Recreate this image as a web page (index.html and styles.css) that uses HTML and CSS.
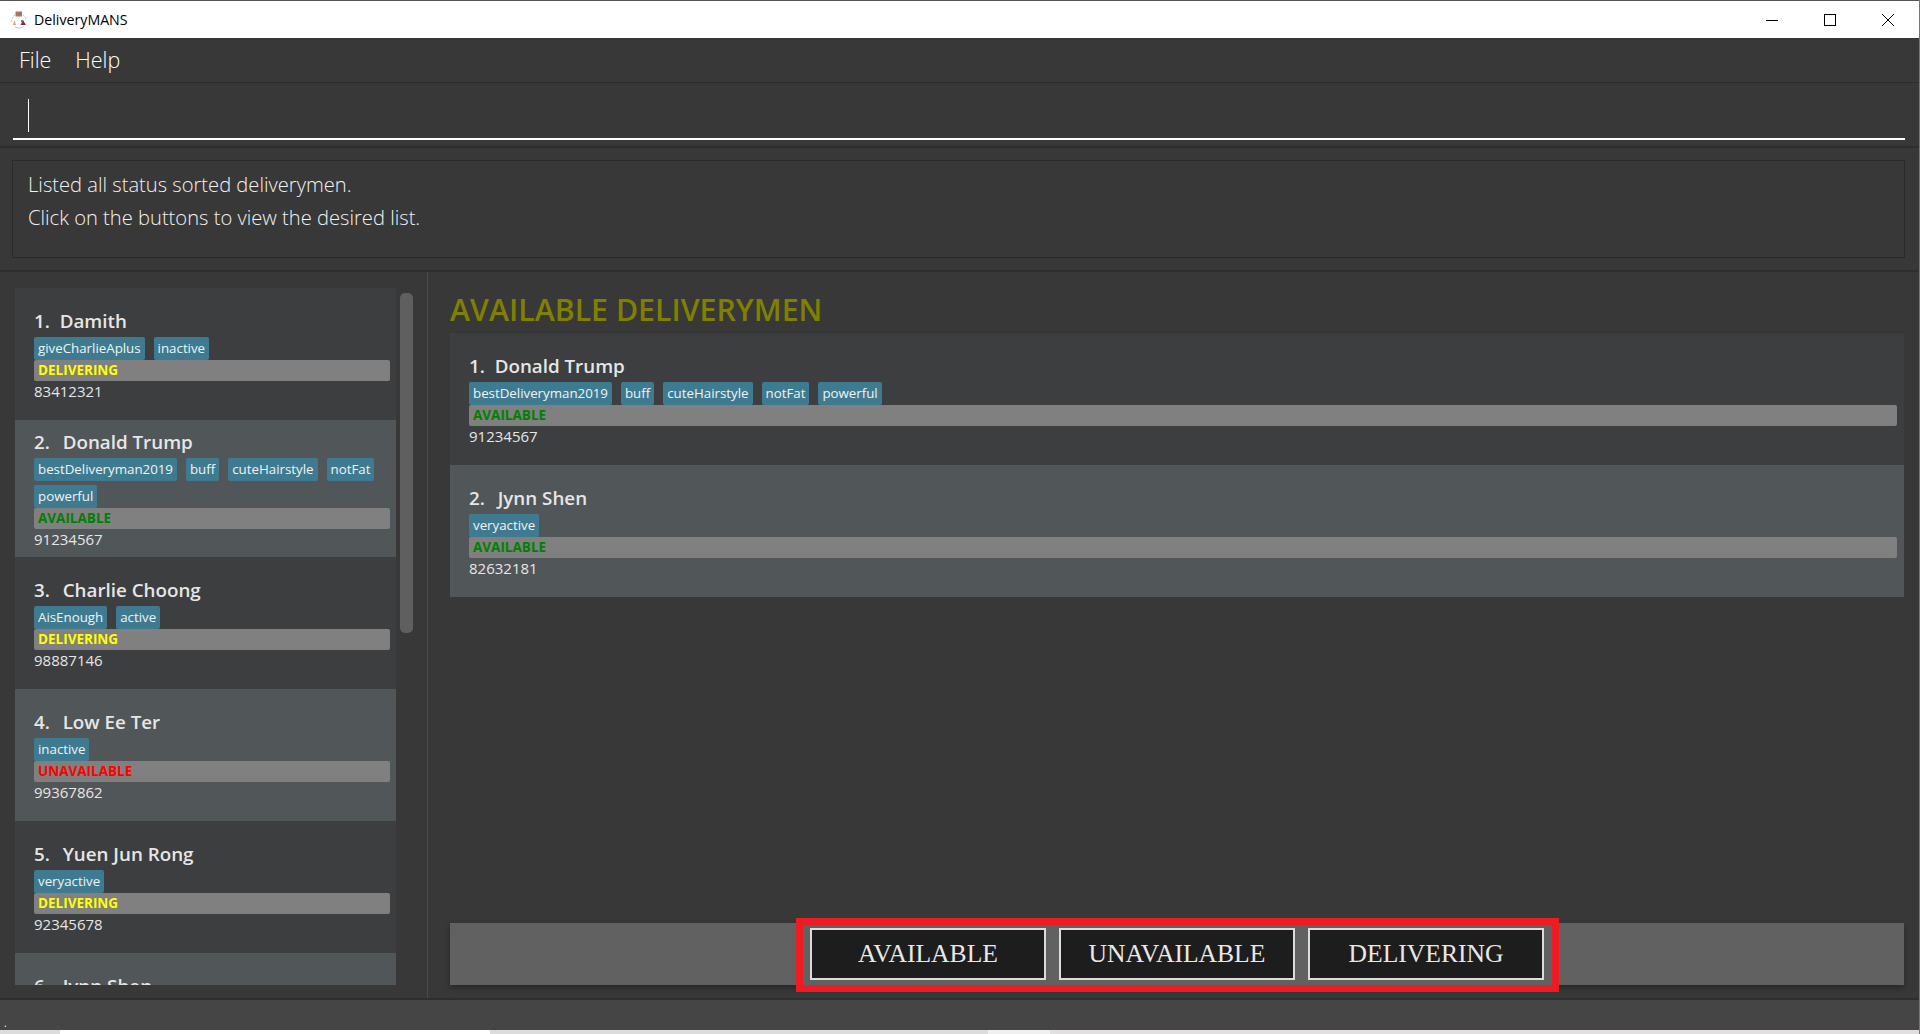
FILE: index.html
```html
<!DOCTYPE html>
<html>
<head>
    <meta charset="UTF-8">
    <meta name="viewport" content="width=device-width, initial-scale=1.0">
    <title>DeliveryMANS</title>
    <link rel="stylesheet" href="styles.css">
</head>
<body>
<div class="titlebar">
    <svg class="app-icon" width="18" height="18" viewBox="0 0 18 18">
        <path d="M5 4 A7.5 7.5 0 0 0 2 12" fill="none" stroke="#a8cbe8" stroke-width="1" stroke-dasharray="2 1"/>
        <path d="M5 16 A7.5 7.5 0 0 0 13 16" fill="none" stroke="#a8cbe8" stroke-width="1"/>
        <path d="M13 4 A7.5 7.5 0 0 1 16 9" fill="none" stroke="#a8cbe8" stroke-width="1" stroke-dasharray="2 1"/>
        <rect x="5.5" y="0.5" width="6.5" height="5" fill="#a9785a"/>
        <path d="M3 14 L4.5 9 L6 14 Z" fill="#e0a080"/>
        <path d="M10.5 14 L13 9 L16 14 Z" fill="#8a2f4a"/>
        <rect x="11" y="9" width="2" height="2" fill="#3f8f8f"/>
    </svg>
    <span class="app-name">DeliveryMANS</span>
    <div class="win-buttons">
        <svg width="14" height="14" viewBox="0 0 14 14"><path d="M1 7.5 H13" stroke="#000" stroke-width="1"/></svg>
        <svg width="14" height="14" viewBox="0 0 14 14"><rect x="1.5" y="1.5" width="11" height="11" fill="none" stroke="#000" stroke-width="1"/></svg>
        <svg width="14" height="14" viewBox="0 0 14 14"><path d="M1 1 L13 13 M13 1 L1 13" stroke="#000" stroke-width="1"/></svg>
    </div>
</div>

<div class="menubar">
    <span>File</span>
    <span>Help</span>
</div>

<div class="command-pane">
    <div class="command-box"><div class="caret"></div></div>
</div>

<div class="result-pane">
    <div class="result-box">
        Listed all status sorted deliverymen.<br>
        Click on the buttons to view the desired list.
    </div>
</div>

<div class="main">
    <div class="left-pane">
        <div class="list left-list">
            <div class="card odd">
                <div class="name"><span class="num one">1.</span>&nbsp; Damith</div>
                <div class="tags"><span class="tag">giveCharlieAplus</span><span class="tag">inactive</span></div>
                <div class="status delivering">DELIVERING</div>
                <div class="phone">83412321</div>
            </div>
            <div class="card even tall">
                <div class="name"><span class="num">2.</span>&nbsp; Donald Trump</div>
                <div class="tags"><span class="tag">bestDeliveryman2019</span><span class="tag">buff</span><span class="tag">cuteHairstyle</span><span class="tag">notFat</span><span class="tag">powerful</span></div>
                <div class="status available">AVAILABLE</div>
                <div class="phone">91234567</div>
            </div>
            <div class="card odd">
                <div class="name"><span class="num">3.</span>&nbsp; Charlie Choong</div>
                <div class="tags"><span class="tag">AisEnough</span><span class="tag">active</span></div>
                <div class="status delivering">DELIVERING</div>
                <div class="phone">98887146</div>
            </div>
            <div class="card even">
                <div class="name"><span class="num">4.</span>&nbsp; Low Ee Ter</div>
                <div class="tags"><span class="tag">inactive</span></div>
                <div class="status unavailable">UNAVAILABLE</div>
                <div class="phone">99367862</div>
            </div>
            <div class="card odd">
                <div class="name"><span class="num">5.</span>&nbsp; Yuen Jun Rong</div>
                <div class="tags"><span class="tag">veryactive</span></div>
                <div class="status delivering">DELIVERING</div>
                <div class="phone">92345678</div>
            </div>
            <div class="card even">
                <div class="name"><span class="num">6.</span>&nbsp; Jynn Shen</div>
                <div class="tags"><span class="tag">veryactive</span></div>
                <div class="status available">AVAILABLE</div>
                <div class="phone">82632181</div>
            </div>
        </div>
        <div class="scroll-track"><div class="scroll-thumb"></div></div>
    </div>

    <div class="right-pane">
        <h2 class="list-title">AVAILABLE DELIVERYMEN</h2>
        <div class="list right-list">
            <div class="card odd">
                <div class="name"><span class="num one">1.</span>&nbsp; Donald Trump</div>
                <div class="tags"><span class="tag">bestDeliveryman2019</span><span class="tag">buff</span><span class="tag">cuteHairstyle</span><span class="tag">notFat</span><span class="tag">powerful</span></div>
                <div class="status available">AVAILABLE</div>
                <div class="phone">91234567</div>
            </div>
            <div class="card even">
                <div class="name"><span class="num">2.</span>&nbsp; Jynn Shen</div>
                <div class="tags"><span class="tag">veryactive</span></div>
                <div class="status available">AVAILABLE</div>
                <div class="phone">82632181</div>
            </div>
        </div>
        <div class="button-bar">
            <button type="button">AVAILABLE</button>
            <button type="button">UNAVAILABLE</button>
            <button type="button">DELIVERING</button>
            <div class="highlight"></div>
        </div>
    </div>
</div>

<div class="statusbar"><span>.</span></div>
<div class="desktop-strip">
    <div class="strip-a"></div>
    <div class="strip-b"></div>
    <div class="strip-a strip-wide"></div>
    <div class="strip-c"></div>
    <div class="strip-d"></div>
</div>
</body>
</html>
```

FILE: styles.css
```css
html, body {
    margin: 0;
    padding: 0;
    height: 1034px;
    overflow: hidden;
}

body {
    font-family: "Open Sans", "Noto Sans", sans-serif;
    background-color: #383838;
    display: flex;
    flex-direction: column;
    border-right: 1px solid #777;
    box-sizing: border-box;
}

.titlebar {
    height: 37px;
    flex: none;
    background-color: white;
    border-top: 1px solid #555;
    display: flex;
    align-items: center;
    padding-left: 10px;
}

.app-icon {
    margin-right: 6px;
}

.app-name {
    font-size: 14.2px;
    color: black;
}

.win-buttons {
    margin-left: auto;
    display: flex;
    gap: 44px;
    padding-right: 24px;
}

.menubar {
    height: 45px;
    flex: none;
    display: flex;
    align-items: center;
    gap: 24px;
    padding: 0 0 2px 19px;
    border-bottom: 1px solid #2c2c2c;
    box-sizing: border-box;
    font-weight: 300;
    font-size: 21.5px;
    color: white;
}

.command-pane {
    height: 65px;
    flex: none;
    padding: 0 14px 0 13px;
    border-bottom: 2px solid #2e2e2e;
    box-sizing: border-box;
}

.command-box {
    height: 57px;
    border-bottom: 2px solid white;
    box-sizing: border-box;
    padding: 16px 0 0 15px;
}

.caret {
    width: 1px;
    height: 33px;
    background-color: white;
}

.result-pane {
    height: 124px;
    flex: none;
    padding: 12px 14px 0 12px;
    border-bottom: 2px solid #2e2e2e;
    box-sizing: border-box;
}

.result-box {
    height: 98px;
    border: 1px solid #2a2a2a;
    box-sizing: border-box;
    padding: 7px 15px;
    font-weight: 300;
    font-size: 20.15px;
    line-height: 33px;
    color: #f2f2f2;
}

.main {
    height: 728px;
    flex: none;
    display: flex;
    border-bottom: 2px solid #2e2e2e;
    box-sizing: border-box;
}

.left-pane {
    width: 428px;
    flex: none;
    box-sizing: border-box;
    padding: 16px 0 0 15px;
    border-right: 1px solid #4a4a4a;
    height: 726px;
    display: flex;
}

.left-list {
    width: 381px;
    height: 697px;
    overflow: hidden;
}

.scroll-track {
    margin-left: 4px;
    padding-top: 5px;
}

.scroll-thumb {
    width: 13px;
    height: 340px;
    border-radius: 5px;
    background-color: #5f5f5f;
}

.right-pane {
    flex: 1;
    padding: 0 15px 0 22px;
    display: flex;
    flex-direction: column;
    height: 713px;
    box-sizing: border-box;
}

.list-title {
    margin: 0;
    height: 61px;
    line-height: 76px;
    font-size: 30.3px;
    font-weight: 600;
    color: olive;
}

.right-list {
    flex: 1;
}

/* content is centred, the wrapped card just has less room round it */
.card {
    padding: 0 6px 0 19px;
    box-sizing: border-box;
    height: 132px;
    flex: none;
    display: flex;
    flex-direction: column;
    justify-content: center;
}

.right-list .card {
    padding-right: 7px;
}

.tall {
    height: 137px;
}

.odd {
    background-color: #3c3e3f;
}

.even {
    background-color: #515658;
}

.name {
    font-size: 18.8px;
    font-weight: 600;
    line-height: 30px;
    padding-bottom: 1px;
    color: #e6e6e6;
    flex: none;
}

.num {
    margin-right: 3px;
}

.num.one {
    margin-right: 0;
}

.tags {
    display: flex;
    flex-wrap: wrap;
    column-gap: 9px;
    row-gap: 4px;
    flex: none;
}

.tag {
    background-color: #3e7b91;
    color: #f2f2f2;
    font-size: 13.3px;
    line-height: 23px;
    padding: 0 4px;
    border-radius: 2px;
}

.status {
    background-color: grey;
    border-radius: 2px;
    height: 21px;
    line-height: 21px;
    padding-left: 4px;
    font-size: 13.5px;
    font-weight: 700;
    flex: none;
}

.delivering {
    color: yellow;
}

.available {
    color: green;
}

.unavailable {
    color: red;
}

.phone {
    font-size: 15px;
    line-height: 21px;
    color: #e6e6e6;
    flex: none;
}

.button-bar {
    position: relative;
    height: 62px;
    flex: none;
    background-color: #616161;
    display: flex;
    justify-content: center;
    align-items: center;
    gap: 13px;
    box-shadow: 0 3px 6px rgba(0, 0, 0, 0.3);
}

.button-bar button {
    width: 236px;
    height: 52px;
    background-color: #1d1d1d;
    border: 2px solid #dcdcdc;
    color: #e8e8e8;
    font-family: "Liberation Serif", serif;
    font-size: 25.6px;
}

/* red box drawn over the screenshot */
.highlight {
    position: absolute;
    left: 346px;
    top: -5px;
    width: 763px;
    height: 74px;
    box-sizing: border-box;
    border: 7px solid #ed1c24;
}

.statusbar {
    height: 30px;
    flex: none;
    background-color: #454545;
    color: white;
    font-size: 10px;
    padding-left: 4px;
    box-sizing: border-box;
    display: flex;
    align-items: flex-end;
}

.desktop-strip {
    height: 4px;
    flex: none;
    display: flex;
}

.strip-a {
    width: 60px;
    background-color: #dcdcdc;
}

.strip-b {
    width: 430px;
    background-color: white;
}

.strip-wide {
    width: 498px;
}

.strip-c {
    width: 62px;
    background-color: #f0f0f0;
}

.strip-d {
    flex: 1;
    background-color: #e2dfe0;
}
```
